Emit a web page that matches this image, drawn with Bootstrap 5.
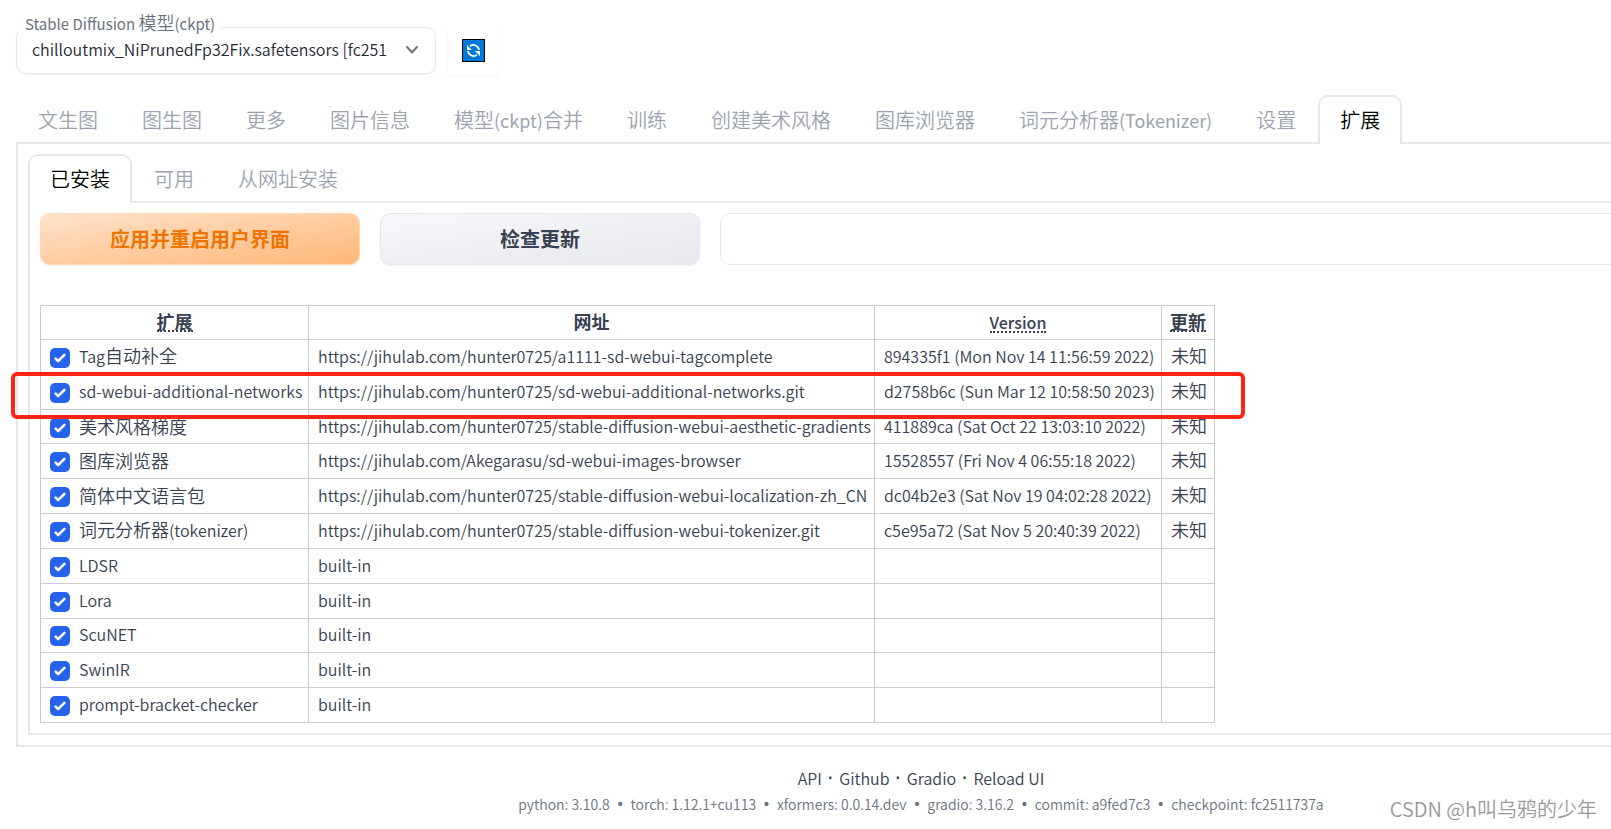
<!DOCTYPE html>
<html lang="zh-CN">
<head>
<meta charset="utf-8">
<meta name="viewport" content="width=device-width, initial-scale=1">
<title>Stable Diffusion</title>
<link href="https://cdn.jsdelivr.net/npm/bootstrap@5.3.0/dist/css/bootstrap.min.css" rel="stylesheet">
<style>
html, body { overflow-x: clip; }
body { font-family: "Noto Sans CJK SC", sans-serif; font-size: 16px; font-weight: 350; line-height: 24px; color: #374151; background: #fff; }
.zh { font-size: 18px; line-height: 20px; }
.app { padding: 27px 16px 0; margin-right: -231px; }
.model-box { width: 420px; height: 47px; border: 1px solid #e5e7eb; border-radius: 10px; box-shadow: 0 1px 2px rgba(0,0,0,.06); }
.model-box label { position: absolute; top: -16px; left: 2px; padding: 0 6px; background: #fff; color: #6b7280; font-size: 15px; font-weight: 400; line-height: 24px; white-space: nowrap; }
.model-box label .zh { font-weight: 350; }
.model-box select { appearance: none; border: 0; background: none; color: #1f2937; font-weight: inherit; padding: 0 40px 4px 15px; width: 100%; height: 45px; font-size: 16px; line-height: 24px; }
.model-box svg { position: absolute; right: 16px; top: 15px; pointer-events: none; }
.refresh { width: 51px; height: 48px; margin-left: 12px; padding: 0 0 1px; border: 0; background: #fff; box-shadow: 0 1px 2px rgba(0,0,0,.06); }
.tabs { margin-bottom: -2px; position: relative; }
.tabs.top-tabs { margin-top: 20px; }
.tabs button { border: 2px solid transparent; border-bottom: 0; border-radius: 10px 10px 0 0; background: none; color: #9ca3af; font-size: 20px; font-weight: 350; line-height: 28px; padding: 8px 20px 9px; height: 49px; white-space: nowrap; }
.tabs button.active { border-color: #e5e7eb; background: #fff; color: #000; }
.tabs .lat { font-size: 18px; font-weight: 400; }
.pane { border: 2px solid #e5e7eb; padding: 10px; }
.acts { gap: 20px; }
.act { width: 320px; height: 52px; border-radius: 10px; font-size: 20px; font-weight: 700; border: 1px solid #e5e7eb; color: #374151; background: linear-gradient(to bottom right, #f7f8fa, #e7e8ed); box-shadow: 0 1px 2px rgba(0,0,0,.06); }
.act.main { color: #ee7400; border-color: #ffd8b4; background: linear-gradient(to bottom right, #ffe3cb, #ffb777); }
.info { height: 52px; border: 1px solid #e5e7eb; border-radius: 10px; background: #fff; }
.ext-wrap { width: 1175px; margin-top: 40px; }
.ext { width: 100%; height: 418px; table-layout: fixed; border-collapse: collapse; color: #374151; }
.c-name { width: 268px; } .c-url { width: 566px; } .c-ver { width: 287px; } .c-upd { width: 53px; }
.ext tr { height: 34px; }
.ext th, .ext td { border: 1px solid #ccc; padding: 0 9px 2px; line-height: 24px; white-space: nowrap; vertical-align: middle; }
.ext th { text-align: center; font-weight: 700; padding: 0 0 2px; }
.ext th abbr { cursor: help; text-decoration: none; border-bottom: 2px dotted #374151; display: inline-block; line-height: 18px; }
.ext th .ver { font-weight: 500; }
.ext td label { display: flex; align-items: center; gap: 9px; }
.ext input { appearance: none; flex: none; width: 20px; height: 20px; margin: 4px 0 0; border-radius: 5px; background: #2563eb url("data:image/svg+xml,%3Csvg viewBox='0 0 16 16' fill='white' xmlns='http://www.w3.org/2000/svg'%3E%3Cpath d='M12.207 4.793a1 1 0 010 1.414l-5 5a1 1 0 01-1.414 0l-2-2a1 1 0 011.414-1.414L6.5 9.086l4.293-4.293a1 1 0 011.414 0z'/%3E%3C/svg%3E") center/100% no-repeat; }
.hl { position: absolute; top: 67px; left: -29px; right: -30px; height: 47px; border: 4px solid #ff2414; border-radius: 6px; pointer-events: none; }
footer { padding-top: 19px; }
footer .links { gap: 6px; }
footer a { color: #374151; text-decoration: none; }
footer .sep { font-family: "Liberation Sans", sans-serif; font-weight: 700; }
.versions { font-size: 14px; color: #6b7280; line-height: 20px; margin-top: 4px; gap: 8px; }
.wm { position: absolute; right: 14px; bottom: 6px; font-size: 20px; line-height: 28px; color: #999; }
</style>
</head>
<body>
<div class="app">
  <div class="d-flex">
    <div class="model-box position-relative">
      <label for="ckpt">Stable Diffusion <span class="zh">模型</span>(ckpt)</label>
      <select id="ckpt"><option>chilloutmix_NiPrunedFp32Fix.safetensors [fc251</option></select>
      <svg width="14" height="14" viewBox="0 0 14 14" fill="none" stroke="#6b7280" stroke-width="2" stroke-linecap="round" stroke-linejoin="round"><path d="M2 4l5 5.500 5-5.500"/></svg>
    </div>
    <button type="button" class="refresh d-flex align-items-center justify-content-center" aria-label="刷新">
      <svg width="23" height="23" viewBox="0 0 23 23" fill="none"><rect x=".5" y=".5" width="22" height="22" fill="#0078d7" stroke="#000"/><g stroke="#fff" stroke-width="1.700"><path d="M8 7.200A5.600 5.600 0 0 1 17 11M15 15.800A5.600 5.600 0 0 1 6 12"/></g><path fill="#fff" d="M5 6v5h5zM18 17v-5h-5z"/></svg>
    </button>
  </div>

  <nav class="tabs top-tabs d-flex">
    <button type="button">文生图</button><button type="button">图生图</button><button type="button">更多</button><button type="button">图片信息</button><button type="button">模型<span class="lat">(ckpt)</span>合并</button><button type="button">训练</button><button type="button">创建美术风格</button><button type="button">图库浏览器</button><button type="button">词元分析器<span class="lat">(Tokenizer)</span></button><button type="button">设置</button><button type="button" class="active">扩展</button>
  </nav>
  <main class="pane">
    <nav class="tabs d-flex">
      <button type="button" class="active">已安装</button><button type="button">可用</button><button type="button">从网址安装</button>
    </nav>
    <section class="pane">
      <div class="acts d-flex">
        <button type="button" class="act main">应用并重启用户界面</button>
        <button type="button" class="act">检查更新</button>
        <div class="info flex-grow-1"></div>
      </div>
      <div class="ext-wrap position-relative">
        <table class="ext">
          <colgroup><col class="c-name"><col class="c-url"><col class="c-ver"><col class="c-upd"></colgroup>
          <thead><tr><th><abbr class="zh">扩展</abbr></th><th><span class="zh">网址</span></th><th><abbr class="ver">Version</abbr></th><th><abbr class="zh">更新</abbr></th></tr></thead>
          <tbody>
          <tr><td><label><input type="checkbox" checked><span>Tag<span class="zh">自动补全</span></span></label></td><td>https://jihulab.com/hunter0725/a1111-sd-webui-tagcomplete</td><td>894335f1 (Mon Nov 14 11:56:59 2022)</td><td><span class="zh">未知</span></td></tr>
          <tr><td><label><input type="checkbox" checked><span>sd-webui-additional-networks</span></label></td><td>https://jihulab.com/hunter0725/sd-webui-additional-networks.git</td><td>d2758b6c (Sun Mar 12 10:58:50 2023)</td><td><span class="zh">未知</span></td></tr>
          <tr><td><label><input type="checkbox" checked><span class="zh">美术风格梯度</span></label></td><td>https://jihulab.com/hunter0725/stable-diffusion-webui-aesthetic-gradients</td><td>411889ca (Sat Oct 22 13:03:10 2022)</td><td><span class="zh">未知</span></td></tr>
          <tr><td><label><input type="checkbox" checked><span class="zh">图库浏览器</span></label></td><td>https://jihulab.com/Akegarasu/sd-webui-images-browser</td><td>15528557 (Fri Nov 4 06:55:18 2022)</td><td><span class="zh">未知</span></td></tr>
          <tr><td><label><input type="checkbox" checked><span class="zh">简体中文语言包</span></label></td><td>https://jihulab.com/hunter0725/stable-diffusion-webui-localization-zh_CN</td><td>dc04b2e3 (Sat Nov 19 04:02:28 2022)</td><td><span class="zh">未知</span></td></tr>
          <tr><td><label><input type="checkbox" checked><span><span class="zh">词元分析器</span>(tokenizer)</span></label></td><td>https://jihulab.com/hunter0725/stable-diffusion-webui-tokenizer.git</td><td>c5e95a72 (Sat Nov 5 20:40:39 2022)</td><td><span class="zh">未知</span></td></tr>
          <tr><td><label><input type="checkbox" checked><span>LDSR</span></label></td><td>built-in</td><td></td><td></td></tr>
          <tr><td><label><input type="checkbox" checked><span>Lora</span></label></td><td>built-in</td><td></td><td></td></tr>
          <tr><td><label><input type="checkbox" checked><span>ScuNET</span></label></td><td>built-in</td><td></td><td></td></tr>
          <tr><td><label><input type="checkbox" checked><span>SwinIR</span></label></td><td>built-in</td><td></td><td></td></tr>
          <tr><td><label><input type="checkbox" checked><span>prompt-bracket-checker</span></label></td><td>built-in</td><td></td><td></td></tr>
          </tbody>
        </table>
        <div class="hl"></div>
      </div>
    </section>
  </main>
  <footer>
    <div class="links d-flex justify-content-center"><a href="#">API</a><span class="sep">·</span><a href="#">Github</a><span class="sep">·</span><a href="#">Gradio</a><span class="sep">·</span><a href="#">Reload UI</a></div>
    <div class="versions d-flex justify-content-center"><span>python: 3.10.8</span><span class="sep">•</span><span>torch: 1.12.1+cu113</span><span class="sep">•</span><span>xformers: 0.0.14.dev</span><span class="sep">•</span><span>gradio: 3.16.2</span><span class="sep">•</span><span>commit: a9fed7c3</span><span class="sep">•</span><span>checkpoint: fc2511737a</span></div>
  </footer>
</div>
<div class="wm">CSDN @h叫乌鸦的少年</div>
<script src="https://cdn.jsdelivr.net/npm/bootstrap@5.3.0/dist/js/bootstrap.bundle.min.js"></script>
</body>
</html>
